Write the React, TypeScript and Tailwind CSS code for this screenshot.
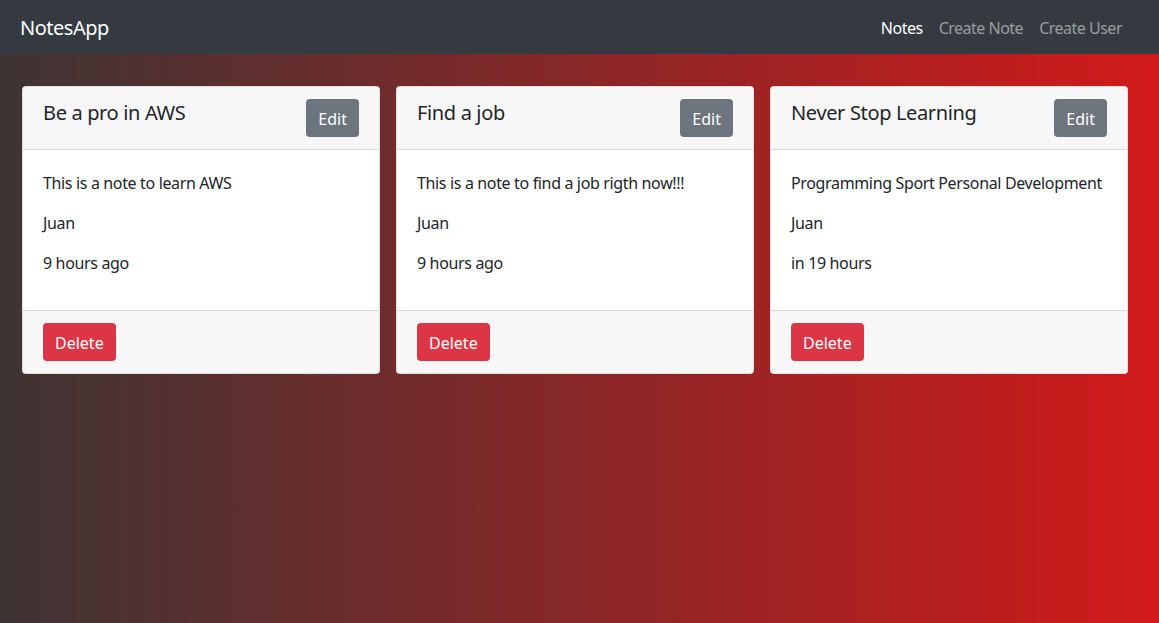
const notes = [
  { id: "1", title: "Be a pro in AWS", content: "This is a note to learn AWS", author: "Juan", date: "9 hours ago" },
  { id: "2", title: "Find a job", content: "This is a note to find a job rigth now!!!", author: "Juan", date: "9 hours ago" },
  { id: "3", title: "Never Stop Learning", content: "Programming Sport Personal Development", author: "Juan", date: "in 19 hours" },
]

function NoteCard({ note }: { note: (typeof notes)[number] }) {
  return (
    <div className="w-[358px] bg-white rounded border border-black/[.125] overflow-hidden">
      <div className="flex justify-between items-start bg-[#f7f7f7] border-b border-black/[.125] px-5 py-3">
        <h5 className="text-[20px] leading-[28px] text-[#212529]">{note.title}</h5>
        <button className="h-[38px] px-3 pt-[2px] rounded bg-[#6c757d] text-white text-base tracking-normal">Edit</button>
      </div>
      <div className="px-5 pt-[21px] pb-[19px] text-[#212529] text-base leading-6">
        <p className="mb-4">{note.content}</p>
        <p className="mb-4">{note.author}</p>
        <p className="mb-4">{note.date}</p>
      </div>
      <div className="bg-[#f7f7f7] border-t border-black/[.125] px-5 py-3">
        <button className="h-[38px] px-3 pt-[2px] rounded bg-[#dc3545] text-white text-base tracking-normal">Delete</button>
      </div>
    </div>
  )
}

export default function App() {
  return (
    <div className="min-h-screen font-['Noto_Sans','Open_Sans',sans-serif] tracking-[-0.35px] bg-[linear-gradient(to_right,#3e3434,#d21a1a)]">
      <nav className="h-[54px] bg-[#343a40] flex items-center justify-between pl-5 pr-[29px]">
        <a className="text-white text-[20px] tracking-[-0.5px] mt-[1px]">NotesApp</a>
        <div className="flex text-base tracking-[-0.5px] mt-[1px]">
          <a className="px-2 text-white">Notes</a>
          <a className="px-2 text-white/50">Create Note</a>
          <a className="px-2 text-white/50">Create User</a>
        </div>
      </nav>
      <div className="flex items-start gap-4 pl-[22px] pt-8">
        {notes.map(n => (
          <NoteCard key={n.id} note={n} />
        ))}
      </div>
    </div>
  )
}
